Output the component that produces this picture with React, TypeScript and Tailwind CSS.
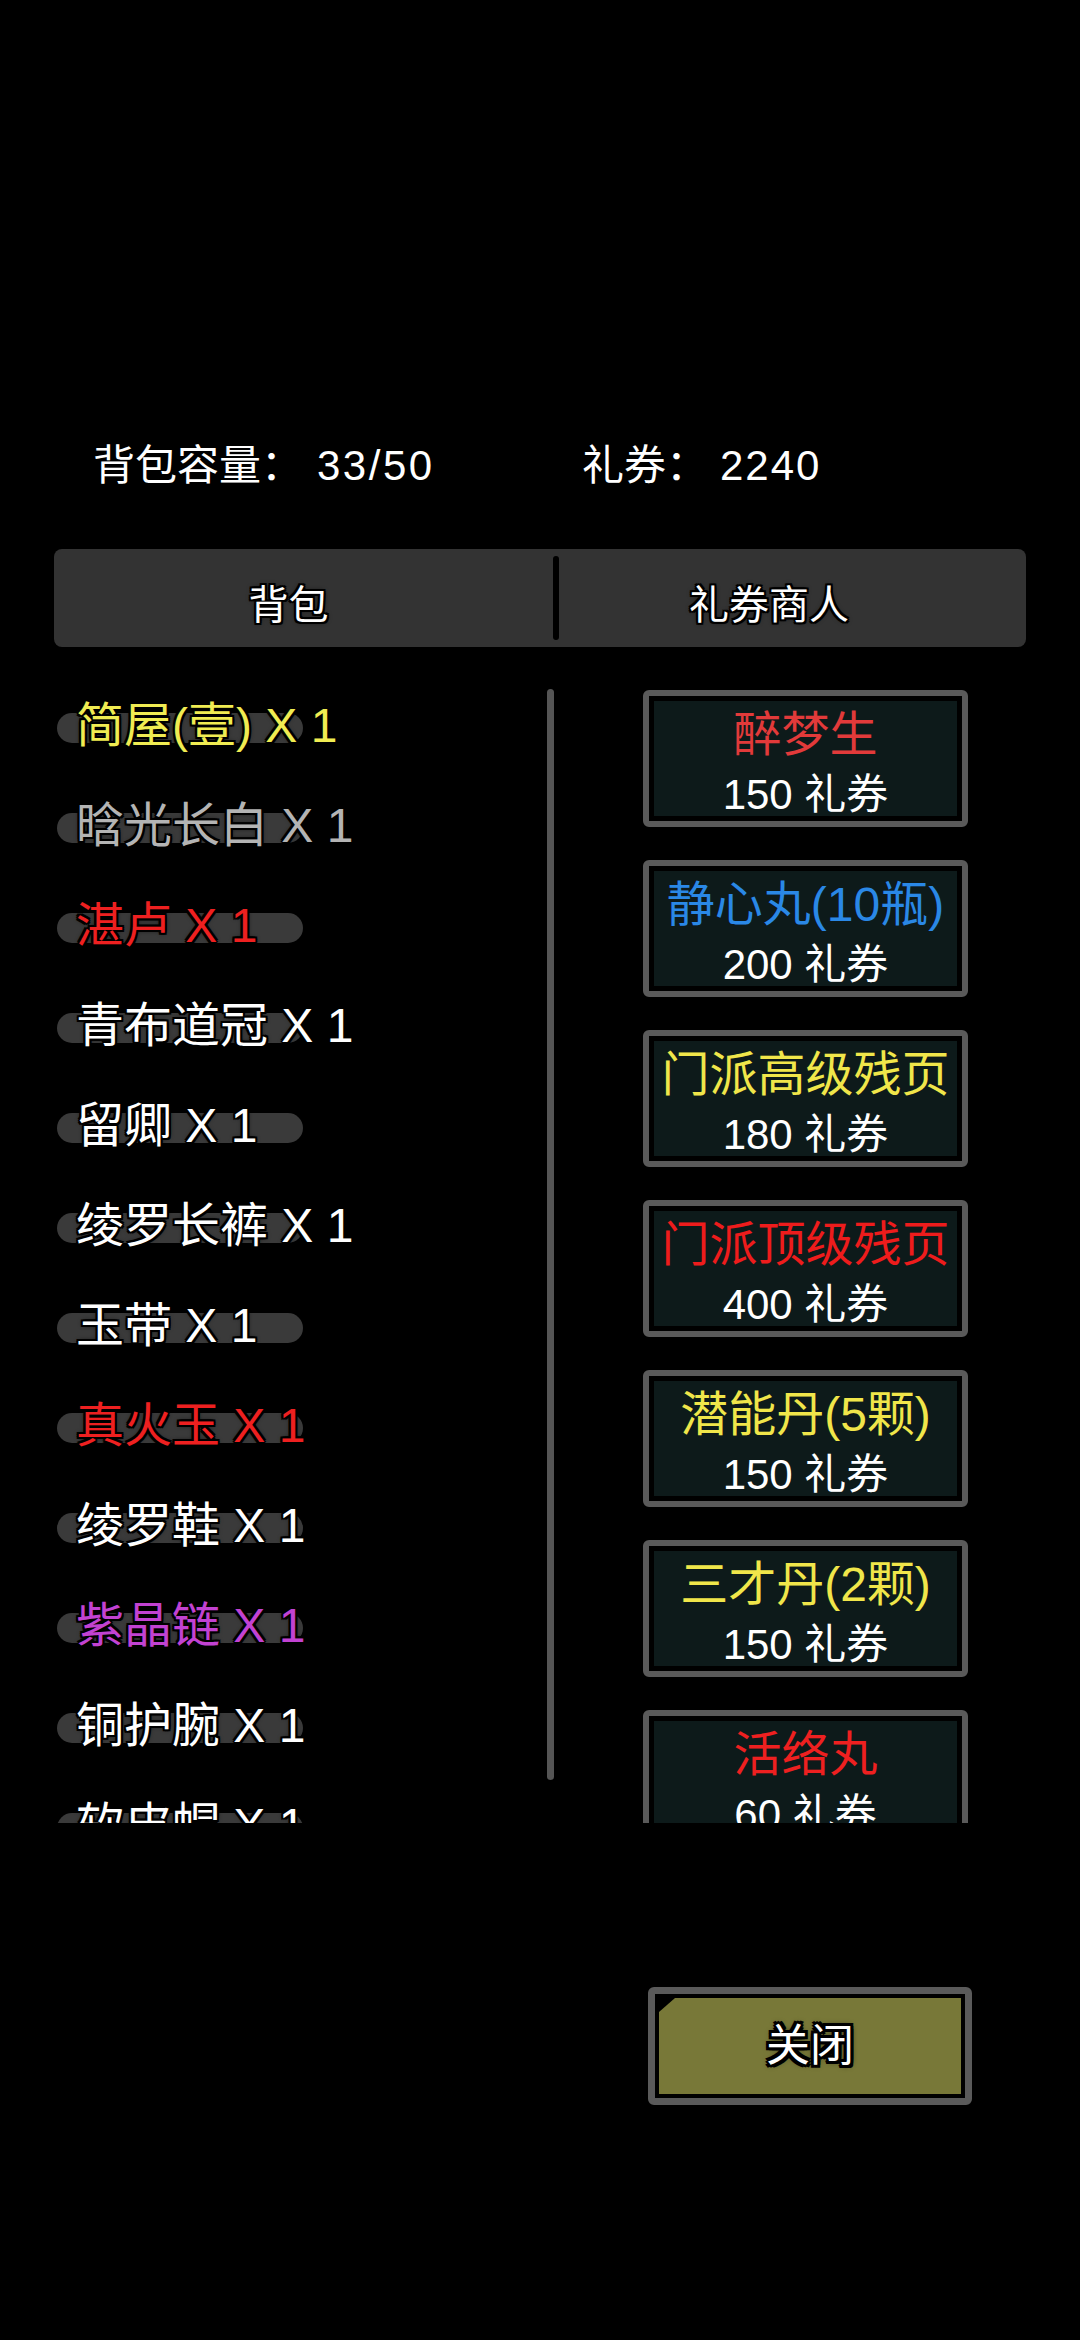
const items = [
  { name: "简屋(壹)", color: "text-[#f0ec52]" },
  { name: "晗光长白", color: "text-[#b4b4b4]" },
  { name: "湛卢", color: "text-[#ee2020]" },
  { name: "青布道冠", color: "text-white" },
  { name: "留卿", color: "text-white" },
  { name: "绫罗长裤", color: "text-white" },
  { name: "玉带", color: "text-white" },
  { name: "真火玉", color: "text-[#ee2020]" },
  { name: "绫罗鞋", color: "text-white" },
  { name: "紫晶链", color: "text-[#c242d2]" },
  { name: "铜护腕", color: "text-white" },
  { name: "软皮帽", color: "text-white" },
];

const shop = [
  { name: "醉梦生", price: 150, color: "text-[#e23a3a]" },
  { name: "静心丸(10瓶)", price: 200, color: "text-[#2a88e6]" },
  { name: "门派高级残页", price: 180, color: "text-[#f0e64a]" },
  { name: "门派顶级残页", price: 400, color: "text-[#ee1c1c]" },
  { name: "潜能丹(5颗)", price: 150, color: "text-[#f0e64a]" },
  { name: "三才丹(2颗)", price: 150, color: "text-[#f0e64a]" },
  { name: "活络丸", price: 60, color: "text-[#ee2020]" },
];

const outline =
  "[text-shadow:-2px_-2px_0_#000,2px_-2px_0_#000,-2px_2px_0_#000,2px_2px_0_#000,0_-2px_0_#000,0_2px_0_#000,-2px_0_0_#000,2px_0_0_#000,0_0_5px_#000]";

const App = () => {
  return (
    <div className="w-[1080px] h-[2340px] bg-black overflow-hidden font-['Liberation_Sans','Noto_Sans_CJK_SC',sans-serif] text-white">
      {/* Header */}
      <div className="pt-[445px] pl-[93px] flex text-[42px] leading-[42px]">
        <div className="w-[489px] flex">
          <span>背包容量：</span>
          <span className="ml-[14px] tracking-[2.5px]">33/50</span>
        </div>
        <div className="flex">
          <span>礼券：</span>
          <span className="ml-[12px] tracking-[2px]">2240</span>
        </div>
      </div>

      {/* Tabs */}
      <div className="mt-[62px] mx-[54px] h-[98px] rounded-[8px] bg-[#333333] flex items-stretch">
        <div className={`w-[499px] flex items-center justify-center pr-[30px] pt-[14px] text-[40px] leading-[40px] ${outline}`}>
          背包
        </div>
        <div className="w-[6px] h-[84px] self-center rounded-full bg-black" />
        <div className={`flex-1 flex items-center justify-center pr-[47px] pt-[14px] text-[40px] leading-[40px] ${outline}`}>
          礼券商人
        </div>
      </div>

      {/* Content */}
      <div className="mt-[29px] mx-[54px] h-[1147px] overflow-hidden relative flex">
        {/* Bag list */}
        <div className="w-[589px] flex flex-col">
          {items.map((it) => (
            <div key={it.name} className="h-[100px] shrink-0 relative flex items-center">
              <div className="absolute left-[3px] top-[37px] w-[246px] h-[30px] rounded-full bg-[#3a3a3a]" />
              <span className={`relative pl-[22px] whitespace-nowrap text-[48px] leading-[48px] ${it.color} ${outline}`}>
                {it.name} X 1
              </span>
            </div>
          ))}
        </div>
        <div className="absolute left-[493px] top-[13px] w-[7px] h-[1091px] rounded-full bg-[#555555]" />

        {/* Shop */}
        <div className="w-[325px] pt-[14px] flex flex-col gap-[33px]">
          {shop.map((s) => (
            <div
              key={s.name}
              className="h-[137px] shrink-0 rounded-[6px] border-[6px] border-[#5a5a5a] bg-black p-[5px]"
            >
              <div className="h-full bg-[#0d1a1a] flex flex-col items-center">
                <div className={`mt-[10px] text-[48px] leading-[48px] whitespace-nowrap ${s.color}`}>{s.name}</div>
                <div className="mt-[15px] text-[42px] leading-[42px] text-white whitespace-nowrap">{s.price} 礼券</div>
              </div>
            </div>
          ))}
        </div>
      </div>

      {/* Close */}
      <div className="mt-[164px] ml-[648px] w-[324px] h-[118px] rounded-[6px] border-[7px] border-[#5a5a5a] bg-black p-[4px]">
        <div className="h-full bg-[#787838] [clip-path:polygon(16px_0,100%_0,100%_100%,0_100%,0_14px)] flex items-center justify-center">
          <span className="text-[44px] leading-[44px] text-white [text-shadow:-3px_-3px_0_#000,3px_-3px_0_#000,-3px_3px_0_#000,3px_3px_0_#000,0_-3px_0_#000,0_3px_0_#000,-3px_0_0_#000,3px_0_0_#000,0_0_6px_#000]">
            关闭
          </span>
        </div>
      </div>
    </div>
  );
};

export default App;
